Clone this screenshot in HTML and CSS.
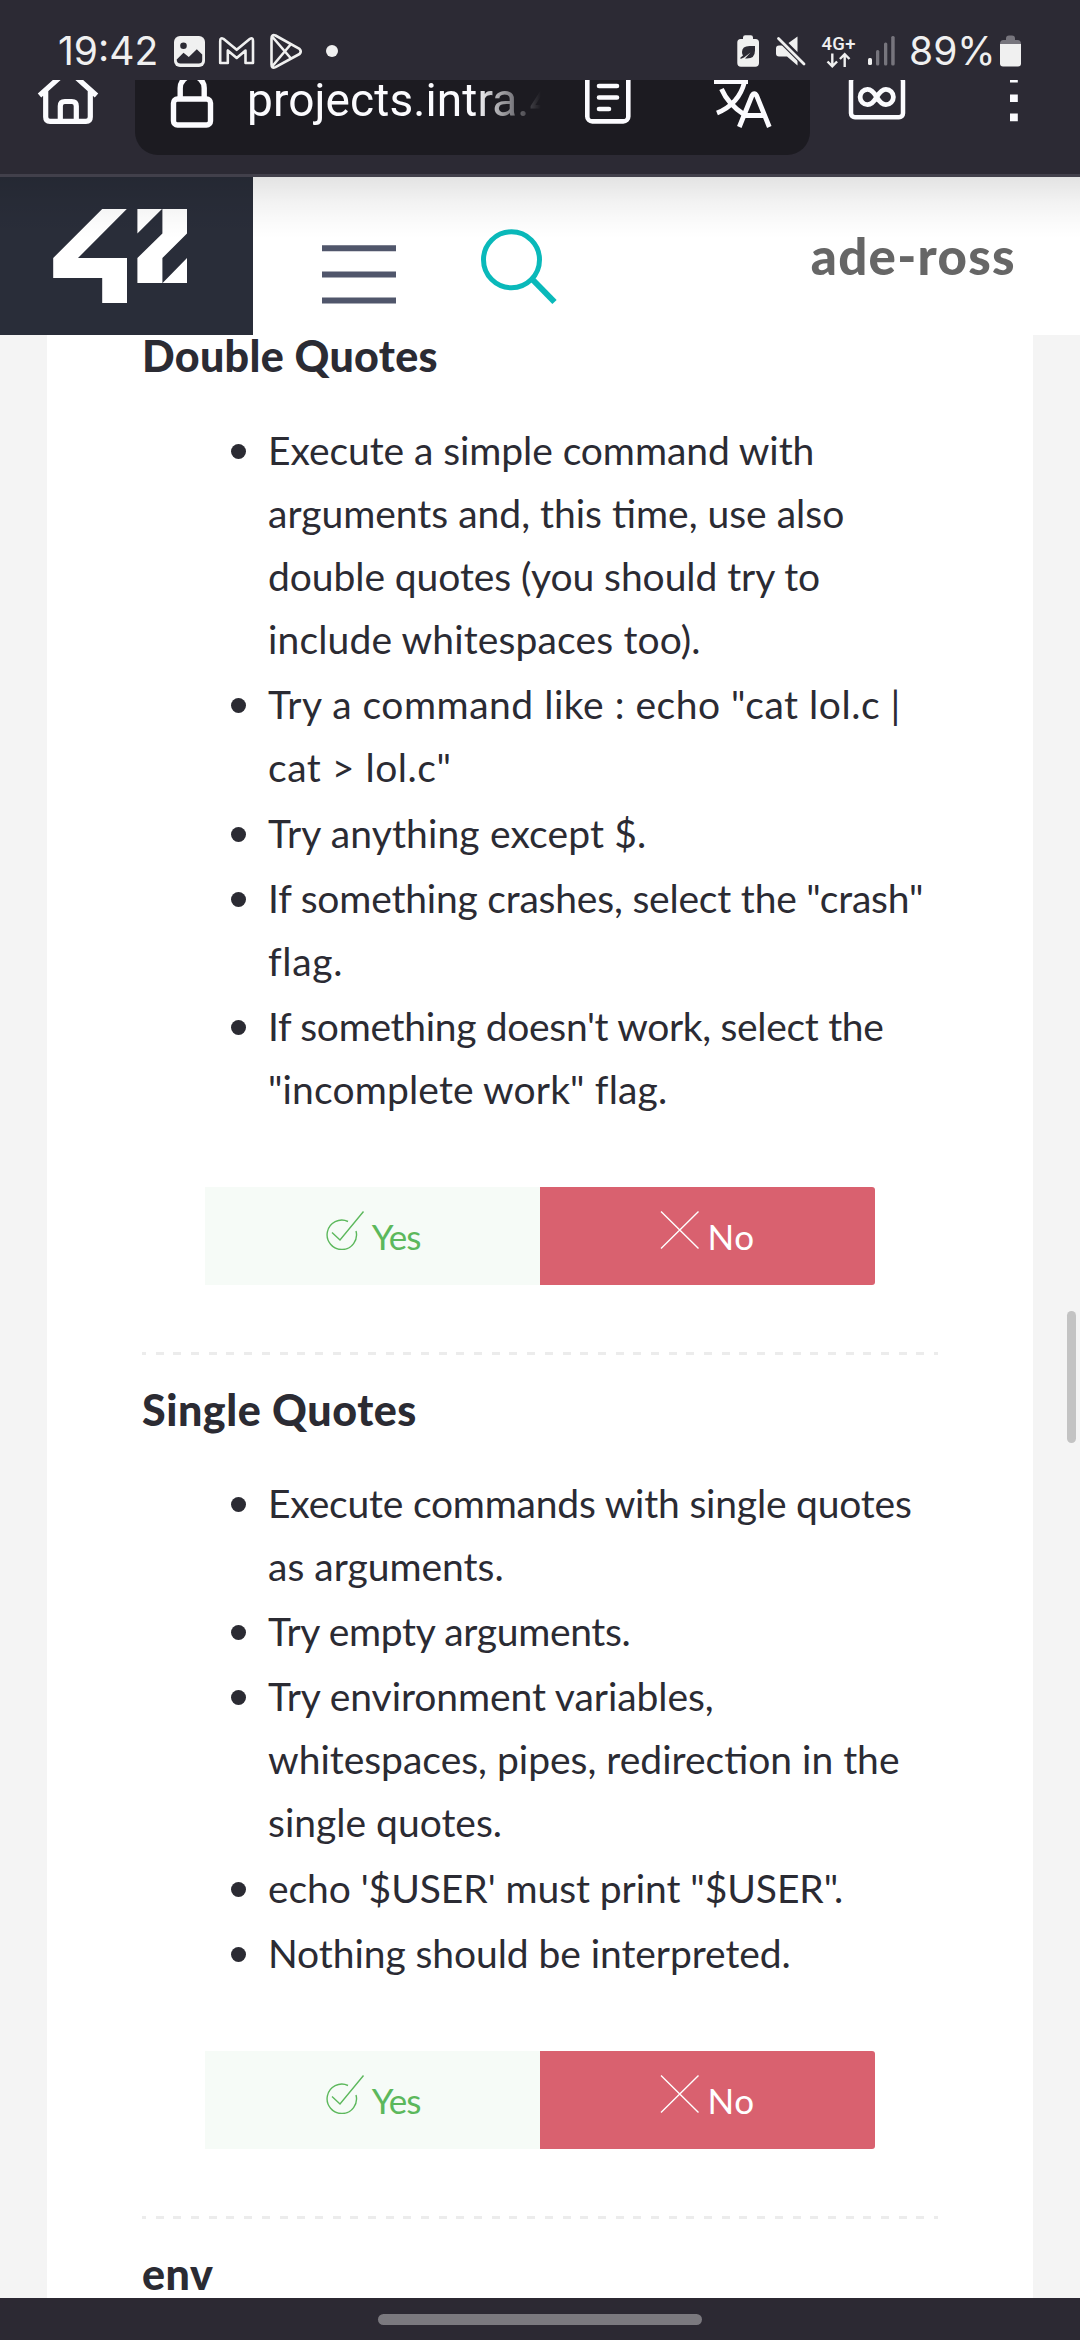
FILE: index.html
```
<!DOCTYPE html>
<html lang="en">
<head>
<meta charset="utf-8">
<title>Evaluation</title>
<link rel="stylesheet" href="styles.css">
</head>
<body>
<div class="status">
  <span class="clock">19:42</span>
  <svg class="notif" viewBox="170 0 180 80" fill="none" stroke="#f0f0f0">
    <rect x="174" y="36" width="31" height="31" rx="6" fill="#f0f0f0" stroke="none"/>
    <circle cx="183.5" cy="45.7" r="3.3" fill="#2c2a34" stroke="none"/>
    <path d="M176.7 59.5 183.5 52.8 188.8 57 196.8 49.3 202.2 54.5V60q0 3.5-3.5 3.5H180.500q-3.800 0-3.800-4z" fill="#2c2a34" stroke="none"/>
    <path d="M220.200 63V41q0-3.800 3.200-2.200L236.700 49.800 250 38.800q3-1.600 3 2.200V63H245.500V50.500L236.700 58 227.800 50.500V63Z" stroke-width="2.600" stroke-linejoin="round"/>
    <path d="M271.500 38.500V64.500q0 4.300 4 2.600L299.500 54q2.600-2.600 0-5.200L275.500 35.500q-4-1.600-4 3zM272.500 37 291 58.500M272.500 66 291 44" stroke-width="2.600" stroke-linejoin="round"/>
    <circle cx="332" cy="51" r="6" fill="#f0f0f0" stroke="none"/>
  </svg>
  <svg class="radio" viewBox="730 0 175 80" fill="#f0f0f0">
    <path d="M743 39v-1.500q0-2.200 2.200-2.200h5.600q2.200 0 2.200 2.200V39h2.500q3.500 0 3.500 3.500V63q0 3.700-3.700 3.700H741q-3.700 0-3.700-3.700V42.500Q737.300 39 740.700 39z"/>
    <path d="M755 46h-5.500q-7.500 0-7.500 6 0 2 1 3.500l-2.500 2v1.500l3.500-1.500 6.500-5-5.500 6q10 1 10-8z" fill="#2c2a34"/>
    <path d="M797.500 36.500V52L788.500 43zM779 45.500h4L797.500 58v7.500L787 56.500h-8q-3 0-3-3v-5q0-3 3-3z"/>
    <path d="M778.500 38.500 804 64" stroke="#2c2a34" stroke-width="5"/>
    <path d="M778.500 38.500 804 64" stroke="#f0f0f0" stroke-width="2.800" stroke-linecap="round"/>
    <text x="821.500" y="49.700" class="net" textLength="34">4G+</text>
    <path d="M832.300 53.500V66M827.500 61.500l4.800 4.800 4.800-4.800M844.700 67V54.500M839.900 59l4.800-4.800 4.800 4.800" fill="none" stroke="#f0f0f0" stroke-width="2.400"/>
    <rect x="868" y="58" width="4" height="7" rx="1.500"/>
    <g fill="#77757d"><rect x="876" y="50" width="3.300" height="15.500" rx="1.500"/><rect x="884" y="42.500" width="3.300" height="23" rx="1.500"/><rect x="891.200" y="36" width="3.500" height="29.500" rx="1.500"/></g>
  </svg>
  <span class="percent">89%</span>
  <svg class="cell" viewBox="998 0 26 80">
    <path d="M1006 40v-1.500q0-3 3-3h3q3 0 3 3V40h2.500q3.500 0 3.500 4h-21q0-4 3.500-4z" fill="#77757d"/>
    <path d="M1000 44h21v19.500q0 3-3 3h-15q-3 0-3-3z" fill="#f0f0f0"/>
  </svg>
</div>

<div class="browser">
  <div class="toolbar">
    <svg class="home" viewBox="36 45 64 110" fill="none" stroke="#fbfbfe" stroke-width="5.200">
      <path d="M39.500 95.500 64 73.500Q68 70 72 73.500L96.500 95.500M45.700 91V117q0 4.300 4.300 4.300H86q4.300 0 4.300-4.300V91M60.300 121V106q0-4.500 4.500-4.500h7q4.500 0 4.500 4.500V121"/>
    </svg>
    <div class="field">
      <svg class="lock" viewBox="165 45 54 110" fill="none" stroke="#fbfbfe" stroke-width="5.400">
        <rect x="173.500" y="99" width="37" height="26" rx="4"/><path d="M180.200 98V88a12 12 0 0 1 24 0V98"/>
      </svg>
      <span class="url">projects.intra.4</span>
      <svg class="reader" viewBox="582 45 52 110" fill="none" stroke="#fbfbfe" stroke-width="4.600">
        <rect x="587.300" y="68" width="41" height="53.400" rx="5"/><path d="M599 86h18M599 97.500h18M599 109h10" stroke-linecap="round"/>
      </svg>
      <svg class="translate" viewBox="710 45 64 110" fill="none" stroke="#fbfbfe" stroke-width="4.800">
        <path d="M714 81.500H748M744.500 82Q739 104 717 113M721.500 89Q728 104 744 114.500M731 82V74"/>
        <path d="M739.300 127 751.800 96Q754.300 91.500 756.800 96L769.300 127M744.500 115.500H764.500"/>
      </svg>
    </div>
    <svg class="tabs" viewBox="846 45 62 110" fill="none" stroke="#fbfbfe" stroke-width="4.500">
      <rect x="851" y="77.300" width="52" height="40" rx="4"/>
      <path d="M876.700 97C872 89 869 89.300 867.500 89.300a7.400 7.700 0 0 0 0 15.400C869 104.700 872 105 876.700 97S884.500 89.300 886 89.300a7.400 7.700 0 0 1 0 15.400C884.500 104.700 881.400 105 876.700 97Z" stroke-width="4.800"/>
    </svg>
    <svg class="more" viewBox="1006 45 16 110" fill="#fbfbfe">
      <path d="M1010 75h7.800v7.500h-7.800zM1010 94.500h7.800v7.600h-7.800zM1010 113.600h7.800v7.600h-7.800z"/>
    </svg>
  </div>
</div>

<header class="site">
  <a class="brand"><svg viewBox="0 177 253 158" fill="#fff">
    <path d="M102.200 209H126.800L78 258H127V303H102.200V278H53.200V258zM137.400 209H162L137.400 233.500zM162.400 209H187V233.500L162.400 258V283H137.400V258L162.400 233.500zM187 258V283H162.600z"/>
  </svg></a>
  <svg class="tools" viewBox="322 177 240 158" fill="none">
    <path d="M322 248.200h74M322 274.500h74M322 300.500h74" stroke="#50566b" stroke-width="6"/>
    <g stroke="#0ab9ba" stroke-width="5"><circle cx="511.500" cy="259.700" r="28"/><path d="M532.500 279.500 554.500 302" stroke-width="6"/></g>
  </svg>
  <span class="login">ade-ross</span>
</header>

<main class="page">
  <article class="card">
    <section>
      <h3>Double Quotes</h3>
      <ul>
        <li><p><span class="s1">Execute a simple command with</span> <span>arguments and, this time, use also</span> <span class="s1">double quotes (you should try to</span> <span class="w1">include whitespaces too).</span></p></li>
        <li><p><span class="w3">Try a command like : echo "cat lol.c |</span> <span class="w3">cat &gt; lol.c"</span></p></li>
        <li><p><span class="w1">Try anything except $.</span></p></li>
        <li><p><span class="s2">If something crashes, select the "crash"</span> <span class="w4">flag.</span></p></li>
        <li><p><span class="s3">If something doesn't work, select the</span> <span class="w1">"incomplete work" flag.</span></p></li>
      </ul>
      <div class="answers">
        <button class="yes"><svg viewBox="0 0 40 40"><path d="M23 11.500A14.700 14.700 0 1 0 31 21M7 22.500 15 30 38.500 1.500"/></svg><span>Yes</span></button>
        <button class="no"><svg viewBox="0 0 40 40"><path d="M1 1.500 38.500 38.500M38.500 1.500 1 38.500"/></svg><span>No</span></button>
      </div>
      <div class="rule"></div>
    </section>
    <section class="next">
      <h3>Single Quotes</h3>
      <ul>
        <li><p><span class="s2">Execute commands with single quotes</span> <span>as arguments.</span></p></li>
        <li><p><span class="s3">Try empty arguments.</span></p></li>
        <li><p><span class="s1">Try environment variables,</span> <span>whitespaces, pipes, redirection in the</span> <span>single quotes.</span></p></li>
        <li><p><span class="s1">echo '$USER' must print "$USER".</span></p></li>
        <li><p><span class="s1">Nothing should be interpreted.</span></p></li>
      </ul>
      <div class="answers">
        <button class="yes"><svg viewBox="0 0 40 40"><path d="M23 11.500A14.700 14.700 0 1 0 31 21M7 22.500 15 30 38.500 1.500"/></svg><span>Yes</span></button>
        <button class="no"><svg viewBox="0 0 40 40"><path d="M1 1.500 38.500 38.500M38.500 1.500 1 38.500"/></svg><span>No</span></button>
      </div>
      <div class="rule"></div>
    </section>
    <section class="next">
      <h3>env</h3>
    </section>
  </article>
  <div class="scrollbar"></div>
</main>
<footer class="gesture"><div></div></footer>
</body>
</html>
```
FILE: styles.css
```
* { box-sizing: border-box; }
body {
  margin: 0; width: 1080px; height: 2340px; overflow: hidden;
  display: flex; flex-direction: column;
  font-family: Lato, "Open Sans", sans-serif; color: #2b2b33; background: #f4f4f4;
}
svg { display: block; flex: none; }

.status {
  height: 80px; flex: none; display: flex; padding-left: 58px;
  background: #2c2a34; color: #f0f0f0;
  font: 39px/102px Inter, sans-serif;
}
.clock { width: 112px; }
.notif { width: 180px; height: 80px; }
.radio { width: 175px; height: 80px; margin-left: 380px; }
.net { font: 500 18.500px Roboto, sans-serif; }
.percent { width: 90px; margin-left: 4px; }
.cell { width: 26px; height: 80px; margin-left: -1px; }

.browser { height: 97px; flex: none; overflow: hidden; background: #2c2a34; border-bottom: 3px solid #42404b; }
.toolbar { display: flex; height: 110px; margin-top: -35px; padding-left: 36px; }
.toolbar svg { height: 110px; }
.home { width: 64px; }
.field { width: 675px; flex: none; margin: 0 36px 0 35px; display: flex; background: #1c1b21; border-radius: 23px; padding-left: 30px; }
.lock { width: 54px; }
.url {
  width: 312px; flex: none; margin: 0 23px 0 28px; white-space: nowrap;
  font: 46px/110px Roboto, sans-serif; letter-spacing: .1px; color: #fbfbfe;
  -webkit-mask-image: linear-gradient(90deg, #000 228px, transparent 294px);
  mask-image: linear-gradient(90deg, #000 228px, transparent 294px);
}
.reader { width: 52px; }
.translate { width: 64px; margin-left: 76px; }
.tabs { width: 62px; }
.more { width: 16px; margin-left: 98px; }

.site { height: 158px; flex: none; display: flex; background: #fff; position: relative; z-index: 1; }
.site::after {
  content: ""; position: absolute; inset: 0 0 auto; height: 62px;
  background: linear-gradient(rgba(0,0,0,.11), rgba(0,0,0,.05) 40%, rgba(0,0,0,.015) 75%, transparent);
}
.brand { width: 253px; background: #292d39; }
.brand svg { width: 253px; height: 158px; }
.tools { width: 240px; height: 158px; margin-left: 69px; }
.login { margin-left: auto; padding-right: 64px; font-weight: 900; font-size: 51px; line-height: 157px; letter-spacing: 1.300px; color: #666; }

.page { flex: 1; min-height: 0; overflow: hidden; position: relative; }
.card { width: 986px; height: 1963px; margin-left: 47px; padding: 0 95px; background: #fff; }
h3 { margin: 0; font-size: 43px; line-height: 41px; height: 40px; font-weight: 900; letter-spacing: .3px; }
.next h3 { letter-spacing: .550px; }
ul { list-style: none; margin: 0; padding: 44px 0 0 89px; display: grid; gap: 2.300px; }
.next ul { padding-top: 42.500px; }
li { display: flex; gap: 22px; }
li::before { content: ""; flex: none; width: 15px; height: 15px; margin-top: 25px; border-radius: 50%; background: #2b2b33; }
li p { margin: 0; font-size: 39px; line-height: 63px; white-space: nowrap; }
li span { display: block; }
.s1 { letter-spacing: -.070px; }
.s2 { letter-spacing: -.200px; }
.s3 { letter-spacing: -.320px; }
.w1 { letter-spacing: .150px; }
.w3 { letter-spacing: .520px; }
.w4 { letter-spacing: .700px; }

.answers { display: flex; width: 670px; height: 98px; margin: 66px 0 67px 63px; }
.answers button {
  flex: 1; border: 0; padding: 0; display: flex; justify-content: center; align-items: flex-start;
  font-family: Lato, sans-serif; font-size: 35px; line-height: 98px;
}
.answers svg { width: 40px; height: 40px; margin: 23px 7px 0 0; fill: none; stroke: currentColor; stroke-width: 1.400; }
.answers .yes { background: #f6fbf7; color: #5cb85c; letter-spacing: -1px; }
.answers .no { background: #d9616f; color: #fff; border-radius: 0 3px 3px 0; letter-spacing: .500px; }
.rule {
  height: 3px; margin: 0 0 34px; width: 796px;
  background: repeating-linear-gradient(90deg, #ececec 0 4px, transparent 4px 13.690px, #ececec 13.690px 17.690px);
}
.scrollbar { position: absolute; left: 1067px; top: 976px; width: 9px; height: 132px; border-radius: 5px; background: #c3c3c3; }

.gesture { height: 42px; flex: none; background: #2c2933; display: flex; justify-content: center; padding-top: 16px; }
.gesture div { width: 324px; height: 11px; border-radius: 6px; background: #7b797f; }
```
